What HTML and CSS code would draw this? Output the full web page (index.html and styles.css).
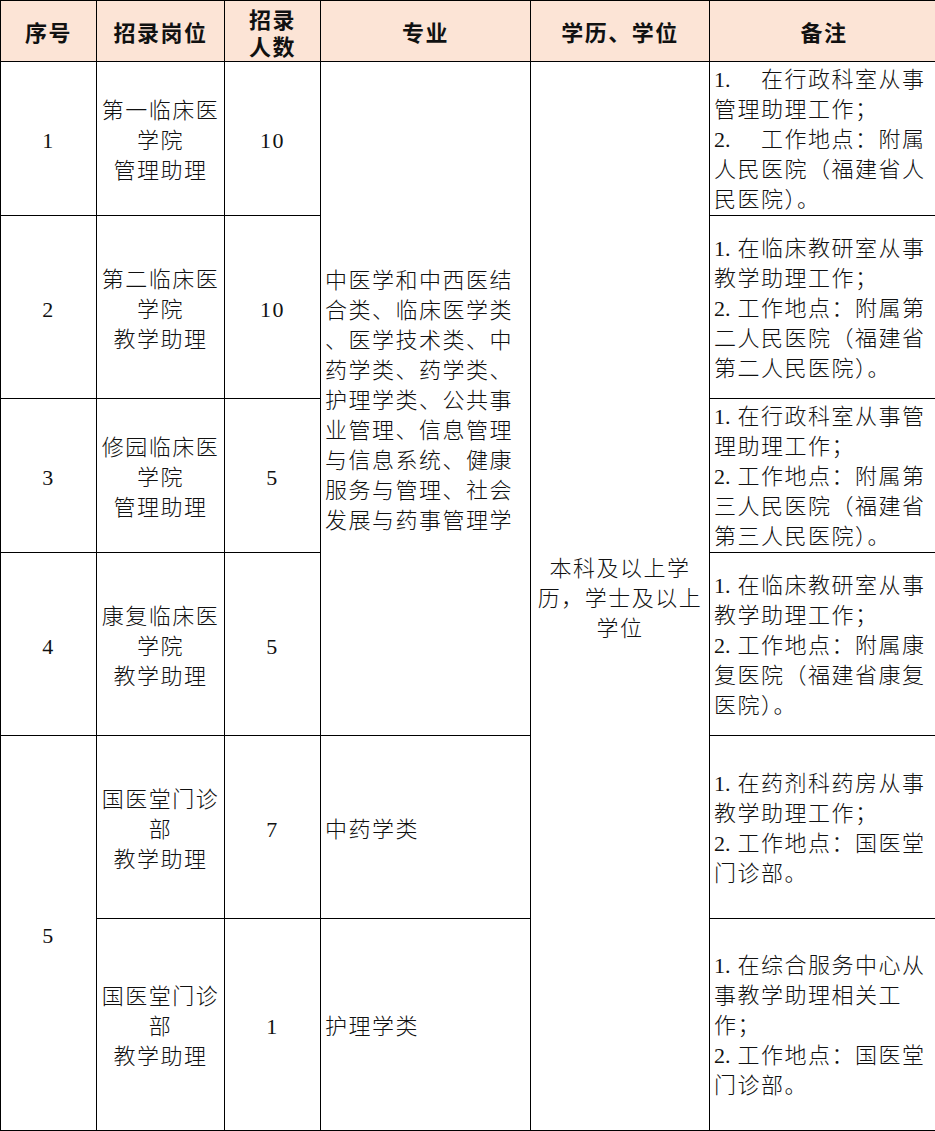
FILE: index.html
```html
<!DOCTYPE html>
<html lang="zh-CN">
<head>
<meta charset="utf-8">
<title>招录岗位表</title>
<link rel="stylesheet" href="styles.css">
</head>
<body>
<table class="jobs">
  <colgroup>
    <col class="c-no">
    <col class="c-post">
    <col class="c-num">
    <col class="c-major">
    <col class="c-edu">
    <col class="c-note">
  </colgroup>
  <thead>
    <tr class="r-head">
      <th>序号</th>
      <th>招录岗位</th>
      <th class="two">招录<br>人数</th>
      <th>专业</th>
      <th>学历、学位</th>
      <th>备注</th>
    </tr>
  </thead>
  <tbody>
    <tr class="r1">
      <td class="ctr">1</td>
      <td class="ctr">第一临床医<br>学院<br>管理助理</td>
      <td class="ctr">10</td>
      <td class="left" rowspan="4">中医学和中西医结<br>合类、临床医学类<br>、医学技术类、中<br>药学类、药学类、<br>护理学类、公共事<br>业管理、信息管理<br>与信息系统、健康<br>服务与管理、社会<br>发展与药事管理学</td>
      <td class="ctr" rowspan="6">本科及以上学<br>历，学士及以上<br>学位</td>
      <td class="left note"><span class="n">1.</span>　在行政科室从事<br>管理助理工作；<br><span class="n">2.</span>　工作地点：附属<br>人民医院（福建省人<br>民医院）。</td>
    </tr>
    <tr class="r2">
      <td class="ctr">2</td>
      <td class="ctr">第二临床医<br>学院<br>教学助理</td>
      <td class="ctr">10</td>
      <td class="left note"><span class="n">1.</span>在临床教研室从事<br>教学助理工作；<br><span class="n">2.</span>工作地点：附属第<br>二人民医院（福建省<br>第二人民医院）。</td>
    </tr>
    <tr class="r3">
      <td class="ctr">3</td>
      <td class="ctr">修园临床医<br>学院<br>管理助理</td>
      <td class="ctr">5</td>
      <td class="left note"><span class="n">1.</span>在行政科室从事管<br>理助理工作；<br><span class="n">2.</span>工作地点：附属第<br>三人民医院（福建省<br>第三人民医院）。</td>
    </tr>
    <tr class="r4">
      <td class="ctr">4</td>
      <td class="ctr">康复临床医<br>学院<br>教学助理</td>
      <td class="ctr">5</td>
      <td class="left note"><span class="n">1.</span>在临床教研室从事<br>教学助理工作；<br><span class="n">2.</span>工作地点：附属康<br>复医院（福建省康复<br>医院）。</td>
    </tr>
    <tr class="r5">
      <td class="ctr" rowspan="2">5</td>
      <td class="ctr">国医堂门诊<br>部<br>教学助理</td>
      <td class="ctr">7</td>
      <td class="left">中药学类</td>
      <td class="left note"><span class="n">1.</span>在药剂科药房从事<br>教学助理工作；<br><span class="n">2.</span>工作地点：国医堂<br>门诊部。</td>
    </tr>
    <tr class="r6">
      <td class="ctr">国医堂门诊<br>部<br>教学助理</td>
      <td class="ctr">1</td>
      <td class="left">护理学类</td>
      <td class="left note"><span class="n">1.</span>在综合服务中心从<br>事教学助理相关工<br>作；<br><span class="n">2.</span>工作地点：国医堂<br>门诊部。</td>
    </tr>
  </tbody>
</table>
</body>
</html>
```

FILE: styles.css
```css
html, body {
  margin: 0;
  padding: 0;
  background: #ffffff;
  overflow: hidden;
}

.jobs {
  border-collapse: collapse;
  table-layout: fixed;
  width: 938px;
  font-family: "Liberation Serif", "Noto Sans CJK SC", serif;
  font-size: 22px;
  font-weight: 300;
  letter-spacing: 1.5px;
  line-height: 30px;
  color: #111111;
}

.c-no { width: 96px; }
.c-post { width: 128px; }
.c-num { width: 96px; }
.c-major { width: 210px; }
.c-edu { width: 179px; }
.c-note { width: 229px; }

.jobs th,
.jobs td {
  border: 1px solid #000000;
  padding: 5px 4px 0;
  vertical-align: middle;
  overflow: hidden;
}

.jobs th {
  background: #fce4d6;
  font-weight: 700;
  text-align: center;
  line-height: 30px;
  padding-top: 6px;
}

.jobs th.two {
  line-height: 27px;
}

.ctr {
  text-align: center;
}

.left {
  text-align: left;
  padding-left: 5px;
}

.jobs td.note {
  padding-top: 3px;
}

.n {
  display: inline-block;
  width: 23.5px;
  letter-spacing: 0;
}

.r-head { height: 61px; }
.r1 { height: 154px; }
.r2 { height: 183px; }
.r3 { height: 153px; }
.r4 { height: 183px; }
.r5 { height: 183px; }
.r6 { height: 212px; }
```
